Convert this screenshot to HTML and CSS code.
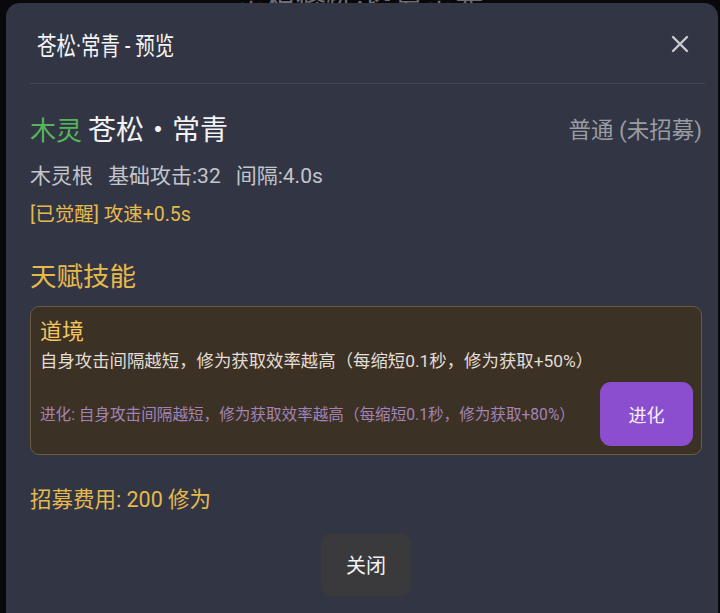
FILE: index.html
```html
<!DOCTYPE html>
<html>
<head>
  <meta charset="utf-8">
  <title>苍松·常青 - 预览</title>
  <link rel="stylesheet" href="styles.css">
</head>
<body>
  <div class="page">
    <div class="page-title">灵根修炼·招募灵宠</div>
  </div>

  <div class="modal">
    <div class="modal-header">
      <div class="modal-title">苍松·常青 - 预览</div>
      <div class="modal-x">
        <svg width="18" height="18" viewBox="0 0 18 18">
          <path d="M2 2 L16 16 M16 2 L2 16" stroke="#c9cbd1" stroke-width="2.4" stroke-linecap="round"/>
        </svg>
      </div>
    </div>
    <div class="divider"></div>

    <div class="modal-body">
      <div class="name-row">
        <div>
          <span class="element">木灵</span>
          <span class="pet-name">苍松·常青</span>
        </div>
        <div class="rarity">普通 (未招募)</div>
      </div>
      <div class="stats">木灵根<span class="gap"></span>基础攻击:32<span class="gap"></span>间隔:4.0s</div>
      <div class="awake">[已觉醒] 攻速+0.5s</div>

      <div class="section-title">天赋技能</div>
      <div class="skill-box">
        <div class="skill-name">道境</div>
        <div class="skill-desc">自身攻击间隔越短，修为获取效率越高（每缩短0.1秒，修为获取+50%）</div>
        <div class="evo-row">
          <div class="evo-desc">进化: 自身攻击间隔越短，修为获取效率越高（每缩短0.1秒，修为获取+80%）</div>
          <button class="evo-btn">进化</button>
        </div>
      </div>

      <div class="cost">招募费用: 200 修为</div>
      <div class="footer">
        <button class="close-btn">关闭</button>
      </div>
    </div>
  </div>
</body>
</html>
```

FILE: styles.css
```css
body {
  margin: 0;
  background-color: #09090c;
  font-family: Roboto, "Noto Sans CJK SC", sans-serif;
  overflow: hidden;
  height: 613px;
}
.page {
  text-align: center;
}
.page-title {
  margin-top: -22px;
  font-size: 30px;
  color: #6b6d74;
}
.modal {
  position: fixed;
  top: 3px;
  left: 6px;
  right: 2px;
  bottom: -30px;
  background-color: #323644;
  border-radius: 14px;
}
.modal-header {
  height: 80px;
  display: flex;
  align-items: center;
  justify-content: space-between;
  padding: 0 29px 0 31px;
}
.modal-title {
  font-size: 25px;
  color: #f4f4f6;
  margin-top: 1px;
  transform: scaleX(0.78);
  transform-origin: left center;
}
.modal-x {
  display: flex;
  margin-top: 2px;
}
.divider {
  height: 1px;
  background-color: #434858;
  margin: 0 13px 0 24px;
}
.modal-body {
  padding: 0 16px 0 24px;
}
.name-row {
  display: flex;
  justify-content: space-between;
  align-items: center;
  margin-top: 26px;
  height: 36px;
}
.element {
  font-family: "Noto Sans CJK SC", sans-serif;
  font-size: 26px;
  color: #56b55a;
}
.pet-name {
  font-family: "Noto Sans CJK SC", sans-serif;
  font-size: 28px;
  color: #f2f2f4;
  margin-left: 2px;
}
.rarity {
  font-size: 22.5px;
  color: #9a9ca3;
}
.stats {
  margin-top: 16px;
  font-size: 21px;
  line-height: 28px;
  color: #c3c5cb;
}
.gap {
  display: inline-block;
  width: 15px;
}
.awake {
  margin-top: 14px;
  font-size: 19.5px;
  line-height: 22px;
  color: #e4b94e;
}
.section-title {
  margin-top: 34px;
  font-size: 26.5px;
  line-height: 34px;
  color: #e8ba4a;
}
.skill-box {
  margin-top: 12px;
  background-color: #3b3124;
  border: 1px solid #6b5b3f;
  border-radius: 9px;
  padding: 11px 8px 8px 9px;
}
.skill-name {
  font-size: 22px;
  line-height: 28px;
  color: #f0c45e;
}
.skill-desc {
  margin-top: 3px;
  font-size: 17.4px;
  line-height: 24px;
  color: #e2ddd6;
}
.evo-row {
  margin-top: 9px;
  display: flex;
  align-items: center;
  justify-content: space-between;
}
.evo-desc {
  font-size: 15.6px;
  color: #a283b8;
  margin-top: -2px;
}
.evo-btn {
  width: 93px;
  height: 64px;
  border: none;
  border-radius: 11px;
  background-color: #8b4ecf;
  color: #f6f0fb;
  font-family: inherit;
  font-size: 18px;
}
.cost {
  margin-top: 31px;
  font-size: 21.5px;
  line-height: 28px;
  color: #e6b94c;
}
.footer {
  display: flex;
  justify-content: center;
  margin-top: 19px;
}
.close-btn {
  width: 90px;
  height: 63px;
  border: none;
  border-radius: 11px;
  background-color: #3a3a3d;
  color: #f2f2f2;
  font-family: inherit;
  font-size: 20px;
}
```
